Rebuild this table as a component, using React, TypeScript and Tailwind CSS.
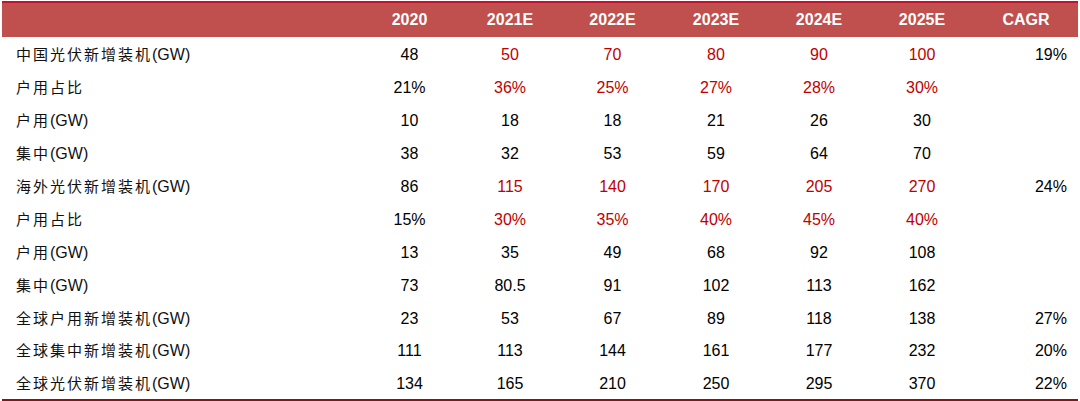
import React from 'react';

type Row = {
    label: string;
    unit?: string;
    values: string[];
    red: boolean[];
    cagr?: string;
};

const headers = ['2020', '2021E', '2022E', '2023E', '2024E', '2025E'];

const R = [false, true, true, true, true, true];
const B = [false, false, false, false, false, false];

const rows: Row[] = [
    { label: '中国光伏新增装机', unit: '(GW)', values: ['48', '50', '70', '80', '90', '100'], red: R, cagr: '19%' },
    { label: '户用占比', values: ['21%', '36%', '25%', '27%', '28%', '30%'], red: R },
    { label: '户用', unit: '(GW)', values: ['10', '18', '18', '21', '26', '30'], red: B },
    { label: '集中', unit: '(GW)', values: ['38', '32', '53', '59', '64', '70'], red: B },
    { label: '海外光伏新增装机', unit: '(GW)', values: ['86', '115', '140', '170', '205', '270'], red: R, cagr: '24%' },
    { label: '户用占比', values: ['15%', '30%', '35%', '40%', '45%', '40%'], red: R },
    { label: '户用', unit: '(GW)', values: ['13', '35', '49', '68', '92', '108'], red: B },
    { label: '集中', unit: '(GW)', values: ['73', '80.5', '91', '102', '113', '162'], red: B },
    { label: '全球户用新增装机', unit: '(GW)', values: ['23', '53', '67', '89', '118', '138'], red: B, cagr: '27%' },
    { label: '全球集中新增装机', unit: '(GW)', values: ['111', '113', '144', '161', '177', '232'], red: B, cagr: '20%' },
    { label: '全球光伏新增装机', unit: '(GW)', values: ['134', '165', '210', '250', '295', '370'], red: B, cagr: '22%' },
];

// label | 2020 | 2021E | 2022E | 2023E | 2024E | 2025E | CAGR
const cols = 'grid grid-cols-[358px_99px_102px_103px_104px_102px_104px_104px]';

export default function App() {
    return (
        <div className="w-[1080px] h-[401px] bg-white pt-[1px] pl-[2px] font-['Liberation_Sans','Noto_Sans_CJK_SC',sans-serif]">
            <div className="w-[1076px]">
                <div className="h-[2px] bg-[#c8102e]" />
                <div className={`${cols} h-[34px] items-center bg-[#c0504d] text-white font-bold text-[16px]`}>
                    <div />
                    {headers.map((h) => (
                        <div key={h} className="text-center">{h}</div>
                    ))}
                    <div className="text-center">CAGR</div>
                </div>

                {rows.map((row, i) => (
                    <div key={i} className={`${cols} h-[32.9px] pt-[4px] items-center text-[16px] text-black`}>
                        <div className="pl-[14px] text-[#111]">
                            <span className="tracking-[2px] text-[15px]">{row.label}</span>
                            {row.unit && <span>{row.unit}</span>}
                        </div>
                        {row.values.map((v, j) => (
                            <div key={j} className={`text-center ${row.red[j] ? 'text-[#c00000]' : ''}`}>
                                {v}
                            </div>
                        ))}
                        <div className="text-right pr-[11px]">{row.cagr}</div>
                    </div>
                ))}

                <div className="h-[2px] bg-[#7b1a1a]" />
            </div>
        </div>
    );
}
